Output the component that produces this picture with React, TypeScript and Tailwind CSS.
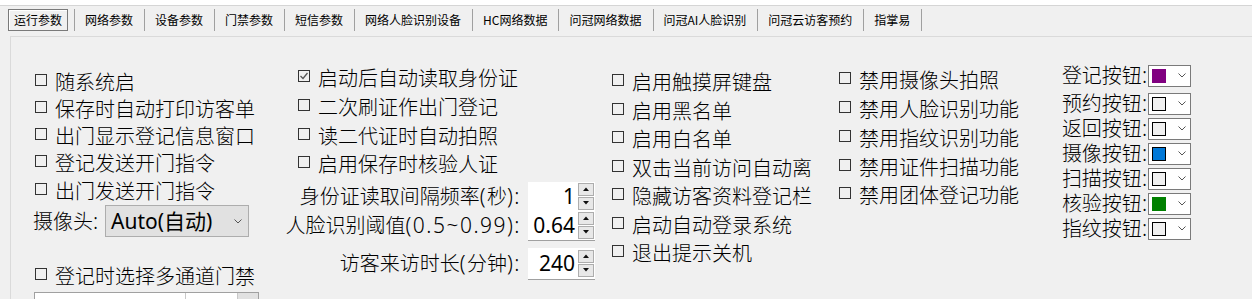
import React from "react";

function Mixed({ s, wide = false }: { s: string; wide?: boolean }) {
  const parts = s.split(/([\x20-\x7E]+)/).filter((p) => p.length > 0);
  return (
    <>
      {parts.map((p, i) =>
        /^[\x20-\x7E]+$/.test(p) ? (
          <span
            key={i}
            className={
              wide
                ? "font-['Noto_Sans',sans-serif] text-[21px] tracking-[1.5px]"
                : "font-['Noto_Sans',sans-serif] text-[21px]"
            }
          >
            {p}
          </span>
        ) : (
          <span key={i}>{p}</span>
        )
      )}
    </>
  );
}

function Box({ checked = false }: { checked?: boolean }) {
  return (
    <span className="mb-[4px] flex h-[12px] w-[12px] shrink-0 items-center justify-center border border-[#333333]">
      {checked && (
        <svg width="10" height="10" viewBox="0 0 10 10">
          <path d="M1.5 5 L4 7.5 L8.5 2" stroke="#555555" strokeWidth="1.3" fill="none" />
        </svg>
      )}
    </span>
  );
}

function Chevron() {
  return (
    <svg width="8" height="5" viewBox="0 0 8 5" className="shrink-0">
      <path d="M0.5 0.5 L4 4 L7.5 0.5" stroke="#555555" strokeWidth="1" fill="none" />
    </svg>
  );
}

function SpinBtn({ up = false }: { up?: boolean }) {
  return (
    <div className="flex h-[13px] w-[16px] shrink-0 items-center justify-center border border-[#adadad] bg-[#e8e8e8]">
      <svg width="6" height="4" viewBox="0 0 6 4">
        {up ? <path d="M0 4 L3 0.5 L6 4 Z" fill="#111111" /> : <path d="M0 0 L3 3.5 L6 0 Z" fill="#111111" />}
      </svg>
    </div>
  );
}

function NumBox({ value, cls }: { value: string; cls: string }) {
  return (
    <div className={`flex w-[67px] shrink-0 items-center bg-white ${cls}`}>
      <span className="flex-1 pr-[3px] text-right font-['Noto_Sans',sans-serif] text-[21px] font-normal leading-none">{value}</span>
      <div className="mr-[1px] flex w-[16px] flex-col gap-[1px]">
        <SpinBtn up />
        <SpinBtn />
      </div>
    </div>
  );
}

function ColorCombo({ sw }: { sw: string }) {
  return (
    <div className="ml-[1px] flex h-[22px] w-[43px] shrink-0 items-center border border-[#7a7a7a] bg-white pl-[3px] pr-[4px]">
      <span className={`h-[14px] w-[14px] border ${sw}`} />
      <span className="ml-auto">
        <Chevron />
      </span>
    </div>
  );
}

function SpinRow({ label, value, cls, row }: { label: string; value: string; cls: string; row: string }) {
  return (
    <div className={row}>
      <div className="flex w-[243px] shrink-0 justify-end whitespace-nowrap pr-[7px]">
        <span>
          <Mixed s={label} wide />
        </span>
      </div>
      <NumBox value={value} cls={cls} />
    </div>
  );
}

const tabs = [
  "网络参数",
  "设备参数",
  "门禁参数",
  "短信参数",
  "网络人脸识别设备",
  "HC网络数据",
  "问冠网络数据",
  "问冠AI人脸识别",
  "问冠云访客预约",
  "指掌易",
];

const col1 = ["随系统启", "保存时自动打印访客单", "出门显示登记信息窗口", "登记发送开门指令", "出门发送开门指令"];
const col2: [string, boolean][] = [
  ["启动后自动读取身份证", true],
  ["二次刷证作出门登记", false],
  ["读二代证时自动拍照", false],
  ["启用保存时核验人证", false],
];
const col3 = ["启用触摸屏键盘", "启用黑名单", "启用白名单", "双击当前访问自动离", "隐藏访客资料登记栏", "启动自动登录系统", "退出提示关机"];
const col4 = ["禁用摄像头拍照", "禁用人脸识别功能", "禁用指纹识别功能", "禁用证件扫描功能", "禁用团体登记功能"];
const col5: [string, string][] = [
  ["登记按钮:", "bg-[#800080] border-[#800080]"],
  ["预约按钮:", "bg-[#f0f0f0] border-black"],
  ["返回按钮:", "bg-[#f0f0f0] border-black"],
  ["摄像按钮:", "bg-[#0078d7] border-black"],
  ["扫描按钮:", "bg-[#f0f0f0] border-black"],
  ["核验按钮:", "bg-[#008000] border-[#008000]"],
  ["指纹按钮:", "bg-[#f0f0f0] border-black"],
];

export default function App() {
  return (
    <div className="h-[299px] w-[1252px] overflow-hidden bg-[#f0f0f0] text-black">
      <div className="h-[6px] border-b border-[#d5d5d5] bg-white" />
      <div className="flex h-[30px] items-start pl-[8px] pt-[3px] font-['Noto_Sans_CJK_SC',sans-serif] text-[12px] leading-none">
        <div className="flex h-[22px] border-r border-[#a0a0a0] pr-[6px]">
          <div className="flex w-[60px] items-center justify-center border border-[#7a7a7a] shadow-[inset_1px_1px_0_#ffffff]">
            运行参数
          </div>
        </div>
        {tabs.map((t) => (
          <div key={t} className="flex h-[22px] items-center border-r border-[#a0a0a0] pl-[10px] pr-[11px]">
            {t}
          </div>
        ))}
      </div>

      <div className="ml-[10px] flex h-[263px] items-start overflow-hidden border-l border-t border-[#dadada] pl-[22px] font-['Noto_Sans_CJK_SC',sans-serif] text-[20px] font-light leading-none">
        {/* Column 1 */}
        <div className="flex w-[252px] shrink-0 flex-col pt-[31px]">
          {col1.map((l) => (
            <div key={l} className="flex h-[27.25px] shrink-0 items-center gap-[8px] pl-[2px]">
              <Box />
              <span>{l}</span>
            </div>
          ))}
          <div className="mt-[1px] flex h-[32px] shrink-0 items-center">
            <span className="w-[72px]">
              <Mixed s="摄像头:" />
            </span>
            <div className="flex h-[32px] w-[144px] items-center border border-[#adadad] bg-[#e1e1e1] pl-[5px] pr-[6px]">
              <span className="flex-1 font-['Noto_Sans','Noto_Sans_CJK_SC',sans-serif] text-[21px] font-normal">Auto(自动)</span>
              <Chevron />
            </div>
          </div>
          <div className="mt-[25px] flex h-[27.25px] shrink-0 items-center gap-[8px] pl-[2px]">
            <Box />
            <span>登记时选择多通道门禁</span>
          </div>
          <div className="ml-[1px] mt-[2px] flex h-[30px] w-[225px] shrink-0 border border-[#a0a0a0] bg-white text-[18px]">
            <div className="w-[151px] border-r border-[#c8c8c8] pl-[6px] pt-[5px]">通道名称</div>
            <div className="w-[52px] border-r border-[#c8c8c8] pl-[6px] pt-[5px]">状态</div>
            <div className="flex-1 bg-[#e1e1e1]" />
          </div>
        </div>

        {/* Column 2 */}
        <div className="flex w-[326px] shrink-0 flex-col pt-[27px]">
          {col2.map(([l, c]) => (
            <div key={l} className="flex h-[28.67px] shrink-0 items-center gap-[8px] pl-[13px]">
              <Box checked={c} />
              <span>{l}</span>
            </div>
          ))}
          <SpinRow row="mt-[3px] flex shrink-0 items-center" label="身份证读取间隔频率(秒):" value="1" cls="h-[29px]" />
          <SpinRow
            row="flex shrink-0 items-center"
            label="人脸识别阈值(0.5~0.99):"
            value="0.64"
            cls="h-[30px] border-b border-[#a0a0a0]"
          />
          <SpinRow
            row="mt-[7px] flex shrink-0 items-center"
            label="访客来访时长(分钟):"
            value="240"
            cls="h-[32px] border-b border-[#a0a0a0]"
          />
        </div>

        {/* Column 3 */}
        <div className="flex w-[228px] shrink-0 flex-col pt-[31px]">
          {col3.map((l) => (
            <div key={l} className="flex h-[28.5px] shrink-0 items-center gap-[8px] pl-[1px]">
              <Box />
              <span>{l}</span>
            </div>
          ))}
        </div>

        {/* Column 4 */}
        <div className="flex w-[216px] shrink-0 flex-col pt-[29px]">
          {col4.map((l) => (
            <div key={l} className="flex h-[28.75px] shrink-0 items-center gap-[8px]">
              <Box />
              <span>{l}</span>
            </div>
          ))}
        </div>

        {/* Column 5 */}
        <div className="flex w-[140px] shrink-0 flex-col pt-[26px]">
          {col5.map(([l, sw], i) => (
            <div key={l} className={i === 1 ? "mt-[3px] flex h-[25px] shrink-0 items-center" : "flex h-[25px] shrink-0 items-center"}>
              <span className="w-[92px] text-right">
                <Mixed s={l} />
              </span>
              <ColorCombo sw={sw} />
            </div>
          ))}
        </div>
      </div>
    </div>
  );
}
